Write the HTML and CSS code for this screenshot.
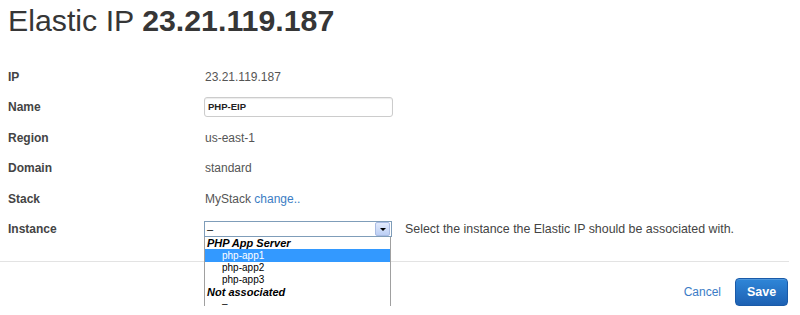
FILE: index.html
```html
<!DOCTYPE html>
<html>
<head>
<meta charset="utf-8">
<link rel="stylesheet" href="styles.css">
</head>
<body>
<h1 class="title">Elastic IP <strong>23.21.119.187</strong></h1>
<div class="form">
  <div class="label">IP</div>
  <div class="value">23.21.119.187</div>

  <div class="label">Name</div>
  <div class="value"><div class="input">PHP-EIP</div></div>

  <div class="label">Region</div>
  <div class="value">us-east-1</div>

  <div class="label">Domain</div>
  <div class="value">standard</div>

  <div class="label">Stack</div>
  <div class="value">MyStack <a class="link" href="#">change..</a></div>

  <div class="label">Instance</div>
  <div class="value instance">
    <div class="select-wrap">
      <div class="select">
        <span class="select-text">–</span>
        <span class="select-btn"><span class="tri"></span></span>
      </div>
      <div class="dropdown">
        <div class="group">PHP App Server</div>
        <div class="opt selected">php-app1</div>
        <div class="opt">php-app2</div>
        <div class="opt">php-app3</div>
        <div class="group">Not associated</div>
        <div class="opt">–</div>
      </div>
    </div>
    <span class="help">Select the instance the Elastic IP should be associated with.</span>
  </div>
</div>
<div class="rule"></div>
<div class="footer">
  <a class="cancel" href="#">Cancel</a>
  <button class="save">Save</button>
</div>
</body>
</html>
```

FILE: styles.css
```css
html, body {
  margin: 0;
  padding: 0;
  background: #fff;
}
body {
  font-family: "Liberation Sans", Arial, sans-serif;
  color: #555;
  font-size: 12px;
}
.title {
  margin: 3px 0 0 8px;
  font-size: 30.3px;
  line-height: 36px;
  font-weight: normal;
  color: #363636;
}
.title strong {
  font-weight: bold;
}
.form {
  display: grid;
  grid-template-columns: 197px 1fr;
  grid-auto-rows: 20px;
  row-gap: 10.5px;
  margin: 27.5px 0 0 8px;
  align-items: center;
  line-height: 20px;
}
.label {
  font-weight: bold;
  color: #444;
}
.value {
  color: #555;
}
.input {
  width: 184px;
  height: 18px;
  border: 1px solid #ccc;
  border-radius: 3px;
  box-shadow: inset 0 1px 1px rgba(0,0,0,0.08);
  font-size: 9.5px;
  font-weight: bold;
  color: #222;
  line-height: 18px;
  padding-left: 3px;
  margin-left: -1px;
}
.link {
  color: #3b7dc4;
  text-decoration: none;
}
.instance {
  display: flex;
  align-items: center;
}
.select-wrap {
  position: relative;
  width: 188px;
  margin-left: -1px;
}
.select {
  display: flex;
  align-items: center;
  height: 14px;
  border: 1px solid #7f9db9;
  background: #fff;
  padding: 0 1px 0 2px;
}
.select-text {
  flex: 1;
  font-size: 11px;
  line-height: 14px;
  color: #000;
}
.select-btn {
  display: flex;
  align-items: center;
  justify-content: center;
  width: 13px;
  height: 12px;
  border: 1px solid #aabce4;
  border-radius: 2px;
  background: linear-gradient(#e3ebfc, #bccff5);
}
.tri {
  width: 0;
  height: 0;
  border-left: 3px solid transparent;
  border-right: 3px solid transparent;
  border-top: 3px solid #000;
}
.dropdown {
  position: absolute;
  top: 100%;
  left: 0;
  width: 185px;
  background: #fff;
  border-left: 1px solid #a0a0a0;
  border-right: 1px solid #a0a0a0;
  border-bottom: 2px solid #666;
  font-size: 10px;
  color: #000;
  z-index: 2;
}
.group {
  height: 12px;
  line-height: 12px;
  padding-left: 2px;
  font-weight: bold;
  font-style: italic;
  font-size: 11px;
}
.opt {
  height: 12px;
  line-height: 12px;
  padding-left: 17px;
}
.opt.selected {
  background: #3399ff;
  color: #fff;
  height: 13px;
  line-height: 13px;
}
.help {
  margin-left: 13px;
  font-size: 12.4px;
  color: #444;
}
.rule {
  margin: 21.5px 11px 0 0;
  border-top: 1px solid #e3e3e3;
}
.footer {
  display: flex;
  justify-content: flex-end;
  align-items: center;
  margin-top: 16px;
  padding-right: 12px;
}
.cancel {
  color: #3b7cc6;
  text-decoration: none;
  font-size: 12px;
  margin-right: 14px;
}
.save {
  width: 53px;
  height: 28px;
  border: 1px solid #1a5aa8;
  border-radius: 4px;
  background: linear-gradient(#2f86d8, #1d61b3);
  color: #fff;
  font-family: "Liberation Sans", Arial, sans-serif;
  font-weight: bold;
  font-size: 12.5px;
  padding: 0;
  box-shadow: inset 0 1px 0 rgba(255,255,255,0.15);
}
```
